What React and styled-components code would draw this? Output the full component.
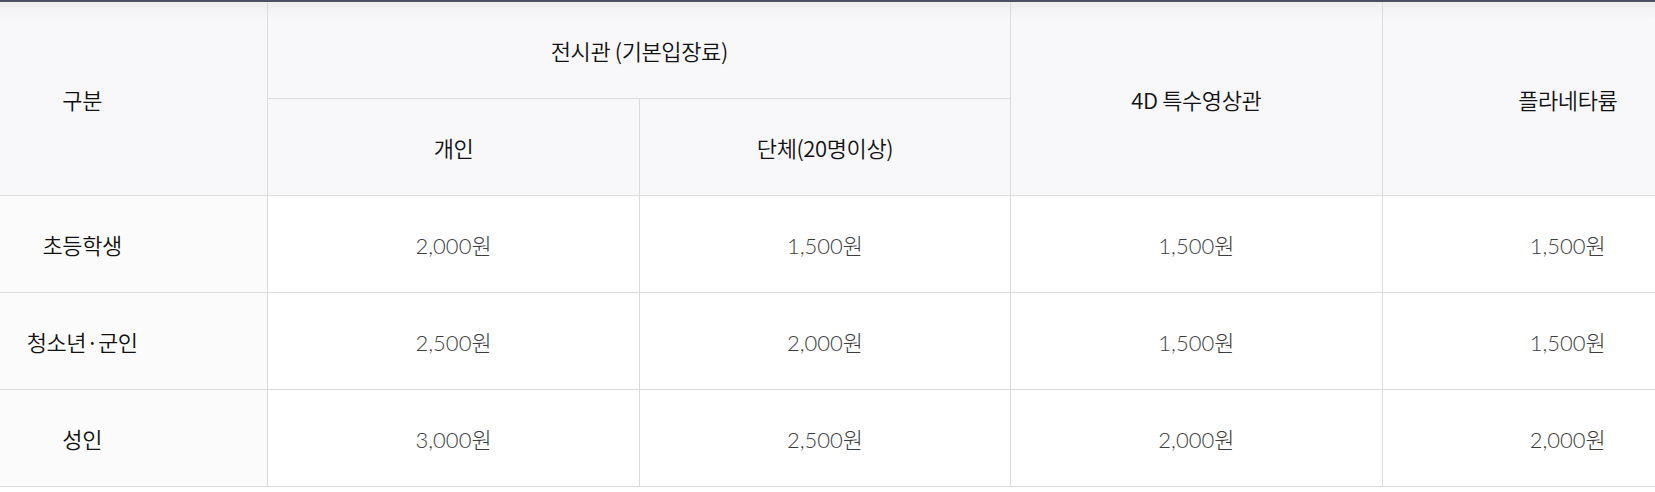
import React from "react";
import styled, { createGlobalStyle } from "styled-components";

const GlobalStyle = createGlobalStyle`
  html, body {
    margin: 0;
    padding: 0;
    background: #ffffff;
  }
  body {
    font-family: "Noto Sans CJK KR", "Noto Sans", sans-serif;
    color: #111;
  }
`;

const Viewport = styled.div`
  width: 100%;
  overflow: hidden;
  padding-bottom: 7px;
`;

const PriceTable = styled.table`
  width: 1858px;
  margin-left: -104px;
  border-collapse: collapse;
  table-layout: fixed;
  border-top: 2px solid #4b5066;
`;

const Col = styled.col`
  width: 20%;
`;

const HeadCell = styled.th`
  height: 96px;
  padding: 0;
  border: 1px solid #dcdcdc;
  border-top: ${(p) => (p.$top ? "2px solid #4b5066" : "1px solid #dcdcdc")};
  background: ${(p) =>
    p.$top
      ? "linear-gradient(to bottom, #eeeef1 0px, #f8f8fa 18px, #f8f8fa 100%)"
      : "#f8f8fa"};
  font-family: "Noto Sans CJK KR", "Noto Sans", sans-serif;
  font-size: 22px;
  font-weight: 350;
  color: #111;
  text-align: center;
  vertical-align: middle;
  letter-spacing: -0.4px;
`;

const LabelCell = styled.th`
  height: 96px;
  padding: 0;
  border: 1px solid #dcdcdc;
  background: #fbfbfb;
  font-family: "Noto Sans CJK KR", "Noto Sans", sans-serif;
  font-size: 22px;
  font-weight: 350;
  color: #111;
  text-align: center;
  vertical-align: middle;
  letter-spacing: -0.4px;
`;

const PriceCell = styled.td`
  height: 96px;
  padding: 0;
  border: 1px solid #dcdcdc;
  background: #ffffff;
  font-family: "Lato", "Noto Sans CJK KR", sans-serif;
  font-size: 22px;
  font-weight: 300;
  color: #3e3e3e;
  text-align: center;
  vertical-align: middle;
  letter-spacing: 0;
`;

const Won = styled.span`
  font-family: "Noto Sans CJK KR", sans-serif;
  font-weight: 300;
`;

const rows = [
  { label: "초등학생", prices: ["2,000", "1,500", "1,500", "1,500"] },
  { label: "청소년·군인", prices: ["2,500", "2,000", "1,500", "1,500"] },
  { label: "성인", prices: ["3,000", "2,500", "2,000", "2,000"] },
];

export default function App() {
  return (
    <>
      <GlobalStyle />
      <Viewport>
        <PriceTable>
          <colgroup>
            <Col />
            <Col />
            <Col />
            <Col />
            <Col />
          </colgroup>
          <thead>
            <tr>
              <HeadCell $top rowSpan={2}>구분</HeadCell>
              <HeadCell $top colSpan={2}>전시관 (기본입장료)</HeadCell>
              <HeadCell $top rowSpan={2}>4D 특수영상관</HeadCell>
              <HeadCell $top rowSpan={2}>플라네타륨</HeadCell>
            </tr>
            <tr>
              <HeadCell>개인</HeadCell>
              <HeadCell>단체(20명이상)</HeadCell>
            </tr>
          </thead>
          <tbody>
            {rows.map((r) => (
              <tr key={r.label}>
                <LabelCell scope="row">{r.label}</LabelCell>
                {r.prices.map((p, i) => (
                  <PriceCell key={i}>
                    {p}
                    <Won>원</Won>
                  </PriceCell>
                ))}
              </tr>
            ))}
          </tbody>
        </PriceTable>
      </Viewport>
    </>
  );
}
